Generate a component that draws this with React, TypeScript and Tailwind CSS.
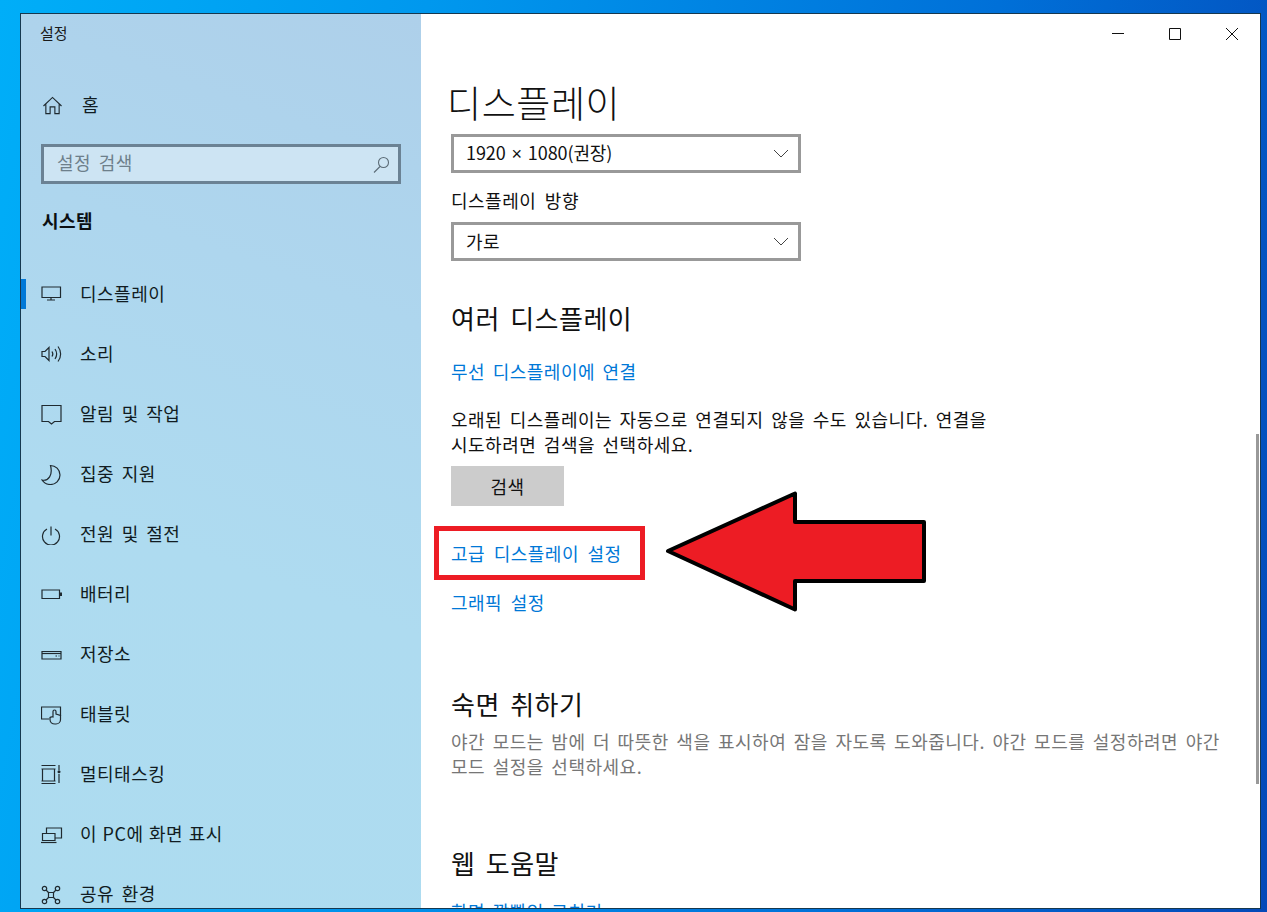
import React from "react";

const S = { fill: "none", stroke: "#1f2a30", strokeWidth: 1.2 };

function Ico({ children }: { children: React.ReactNode }) {
  return (
    <svg width="22" height="22" viewBox="0 0 22 22" className="shrink-0" {...S}>
      {children}
    </svg>
  );
}

const icons: Record<string, React.ReactNode> = {
  display: (
    <Ico>
      <path d="M1 4h18.500v10.500h-18.500z" />
      <path d="M10 14.500v2.500M6 17h8" />
    </Ico>
  ),
  sound: (
    <Ico>
      <path d="M1 8.500h3l4-4v13l-4-4h-3z" />
      <path d="M11 8.500c1 1.500 1 3.500 0 5M14 6c2 3 2 7 0 10M17 3.500c3.500 4.500 3.500 10.500 0 15" />
    </Ico>
  ),
  note: (
    <Ico>
      <path d="M1 2.500h19v16h-6.500l-3 2.500-3-2.500h-6.500z" />
    </Ico>
  ),
  moon: (
    <Ico>
      <path d="M9.500 2.500c5 0 9.500 4 9.500 9.500s-4.500 9.500-9.500 9.500c-3.500 0-6.500-1.500-8.500-4.500 6.500 1.500 11-5 8.500-14.500z" />
    </Ico>
  ),
  power: (
    <Ico>
      <path d="M10 3.500v9" />
      <path d="M6 6a8.500 8.500 0 1 0 8 0" />
    </Ico>
  ),
  battery: (
    <Ico>
      <path d="M1 7h17.500v8.500h-17.500z" />
      <path d="M20 9.500v3.500" strokeWidth="2" />
    </Ico>
  ),
  storage: (
    <Ico>
      <path d="M1 8.500h19v7.500h-19z" />
      <path d="M1 10.500h19" />
      <path d="M14.500 13h1.500M17.500 13h1" />
    </Ico>
  ),
  tablet: (
    <Ico>
      <path d="M8 16h-7.500v-12h19v9" />
      <path d="M9 14.500c1-1 3-.5 3-.5v-5.500a1.500 1.500 0 0 1 3 0v2.500l4.500 1.500v4c0 2.500-2 4.500-4.500 4.500h-1c-3 0-5-2-5-4.500z" />
    </Ico>
  ),
  multi: (
    <Ico>
      <path d="M.5 2.500h14M.5 6h14M1.500 6v12M13.500 6v12M.5 18h14M.5 20.500h14" />
      <path d="M18 2v5M18 11v9" />
      <circle cx="18" cy="8.800" r="1.500" fill="#1f2a30" stroke="none" />
    </Ico>
  ),
  project: (
    <Ico>
      <path d="M5.500 10v-5h15v10h-6.500" />
      <path d="M1.500 10.500h12.500v7h-12.500z" />
      <path d="M0 19.500h15.500" />
    </Ico>
  ),
  share: (
    <Ico>
      <circle cx="3.500" cy="5.500" r="2.200" />
      <circle cx="16.500" cy="5.500" r="2.200" />
      <circle cx="3.500" cy="18.500" r="2.200" />
      <circle cx="16.500" cy="18.500" r="2.200" />
      <path d="M7.500 9.500h5v5h-5z" />
      <path d="M5 7l2.500 2.500M15 7l-2.500 2.500M5 17l2.500-2.500M15 17l-2.500-2.500" />
    </Ico>
  ),
};

const items: [string, string][] = [
  ["display", "디스플레이"],
  ["sound", "소리"],
  ["note", "알림 및 작업"],
  ["moon", "집중 지원"],
  ["power", "전원 및 절전"],
  ["battery", "배터리"],
  ["storage", "저장소"],
  ["tablet", "태블릿"],
  ["multi", "멀티태스킹"],
  ["project", "이 PC에 화면 표시"],
  ["share", "공유 환경"],
];

function Chevron() {
  return (
    <svg width="16" height="9" viewBox="0 0 16 9" fill="none" stroke="#444" strokeWidth="1">
      <path d="M1 1l7 7 7-7" />
    </svg>
  );
}

function Select({ children }: { children: React.ReactNode }) {
  return (
    <div className="w-[350px] h-[39px] border-[3px] border-[#999999] flex items-center justify-between pl-[12px] pr-[9px] text-[18px] text-[#111]">
      <span>{children}</span>
      <Chevron />
    </div>
  );
}

export default function App() {
  return (
    <div className="w-[1267px] h-[912px] overflow-hidden p-[13px_6px_3px_20px] bg-[linear-gradient(100deg,#00aef8_0%,#0098ee_30%,#0070d8_70%,#0449b8_100%)] font-['Noto_Sans_CJK_KR','Noto_Sans',sans-serif] tracking-[0.5px] [word-spacing:3px]">
      <div className="relative w-[1241px] h-[896px] border border-[#16384f] flex overflow-hidden bg-white">
        {/* Sidebar */}
        <aside className="w-[400px] shrink-0 h-full bg-[linear-gradient(200deg,#aed0ea_0%,#aed6ee_30%,#aedbf0_60%,#addcf0_100%)] text-[#111c22]">
          <div className="h-[38px] pl-[19px] flex items-center text-[15px] tracking-normal text-[#1a1a1a]">설정</div>
          <div className="mt-[23px] h-[60px] flex items-center pl-[22px] gap-[20px] text-[18px]">
            <svg width="19" height="19" viewBox="0 0 20 20" fill="none" stroke="#1f2a30" strokeWidth="1.200">
              <path d="M0.500 10.500l9.500-9 9.500 9M3 8.500v10h4.500v-7h5v7h4.500v-10" />
            </svg>
            <span className="pb-[2px]">홈</span>
          </div>
          <div className="mt-[9px] ml-[20px] w-[360px] h-[40px] border-[3px] border-[#6b8294] bg-[#cde4f3] flex items-center justify-between pl-[13px] pr-[8px] text-[18px] text-[#6d7f8b]">
            <span className="pb-[3px]">설정 검색</span>
            <svg width="17" height="17" viewBox="0 0 17 17" fill="none" stroke="#5b6b76" strokeWidth="1.100">
              <circle cx="10.500" cy="6.500" r="5" />
              <path d="M7 10.500l-6 6" />
            </svg>
          </div>
          <div className="mt-[22px] h-[30px] pl-[21px] pb-[2px] flex items-center text-[18px] font-bold text-[#0b0f12]">시스템</div>
          <nav className="mt-[28px]">
            {items.map(([icon, label], i) => (
              <div key={label} className="relative h-[60px] flex items-center pl-[20px] gap-[17px] text-[18px]">
                {i === 0 && <span className="absolute left-0 top-[15px] w-[5px] h-[30px] bg-[#0078d7]" />}
                {icons[icon]}
                <span className={icon === "project" ? "pb-[2px] [word-spacing:1px]" : "pb-[2px]"}>{label}</span>
              </div>
            ))}
          </nav>
        </aside>

        {/* Main */}
        <main className="flex-1 min-w-0 h-full pl-[30px] text-[#111]">
          <h1 className="mt-[62px] ml-[-4px] h-[52px] flex items-center text-[37px] leading-none font-light tracking-[0.6px] text-[#111]">디스플레이</h1>
          <div className="mt-[6px]">
            <Select>
              <span className="tracking-[-0.1px] [word-spacing:0]">
                1920 <span className="font-['Liberation_Sans'] px-[2px]">×</span> 1080(권장)
              </span>
            </Select>
          </div>
          <div className="mt-[13px] h-[28px] flex items-center text-[18px] [word-spacing:4px]">디스플레이 방향</div>
          <div className="mt-[8px]"><Select>가로</Select></div>
          <h2 className="mt-[38px] h-[36px] flex items-center text-[26px] tracking-[0.5px] [word-spacing:4px] font-normal">여러 디스플레이</h2>
          <a className="mt-[22px] h-[28px] flex items-center text-[18px] text-[#0078d7]">무선 디스플레이에 연결</a>
          <p className="mt-[22px] text-[18px] leading-[25px] w-[600px]">
            오래된 디스플레이는 자동으로 연결되지 않을 수도 있습니다. 연결을
            <br />
            시도하려면 검색을 선택하세요.
          </p>
          <div className="mt-[9px] w-[113px] h-[40px] bg-[#cccccc] flex items-center justify-center text-[18px]">검색</div>
          <a className="mt-[20px] ml-[-17px] w-[211px] h-[54px] border-[5px] border-[#ed1c24] pl-[12px] flex items-center text-[18px] text-[#0078d7] [word-spacing:4px]">
            고급 디스플레이 설정
          </a>
          <a className="mt-[8px] h-[28px] flex items-center text-[18px] text-[#0078d7] [word-spacing:4px]">그래픽 설정</a>
          <h2 className="mt-[69px] h-[36px] flex items-center text-[26px] tracking-[0.5px] [word-spacing:4px] font-normal">숙면 취하기</h2>
          <p className="mt-[8px] text-[18px] leading-[25px] w-[790px] text-[#767676]">
            야간 모드는 밤에 더 따뜻한 색을 표시하여 잠을 자도록 도와줍니다. 야간 모드를 설정하려면 야간
            <br />
            모드 설정을 선택하세요.
          </p>
          <h2 className="mt-[65px] h-[36px] flex items-center text-[26px] tracking-[0.5px] [word-spacing:4px] font-normal">웹 도움말</h2>
          <a className="mt-[17px] h-[28px] flex items-center text-[18px] text-[#0078d7]">화면 깜빡임 고치기</a>
        </main>

        {/* Window controls */}
        <div className="absolute right-[22px] top-[14px] flex items-center gap-[45px]">
          <svg width="12" height="12" viewBox="0 0 12 12" stroke="#111" strokeWidth="1"><path d="M0 5.500h12" /></svg>
          <svg width="12" height="12" viewBox="0 0 12 12" fill="none" stroke="#111" strokeWidth="1"><path d="M.5.500h11v11h-11z" /></svg>
          <svg width="12" height="12" viewBox="0 0 12 12" stroke="#111" strokeWidth="1"><path d="M0 0l12 12M12 0l-12 12" /></svg>
        </div>

        {/* Scrollbar thumb */}
        <div className="absolute right-[1px] top-[420px] w-[3px] h-[350px] bg-[#999999]" />

        {/* Annotation arrow */}
        <svg className="absolute left-[643px] top-[477px]" width="266" height="122" viewBox="0 0 266 122">
          <path
            d="M4 60 L131 2.500 V31 H260 V90 H131 V118.500 Z"
            fill="#ed1c24"
            stroke="#000"
            strokeWidth="4"
            strokeLinejoin="round"
          />
        </svg>
      </div>
    </div>
  );
}
